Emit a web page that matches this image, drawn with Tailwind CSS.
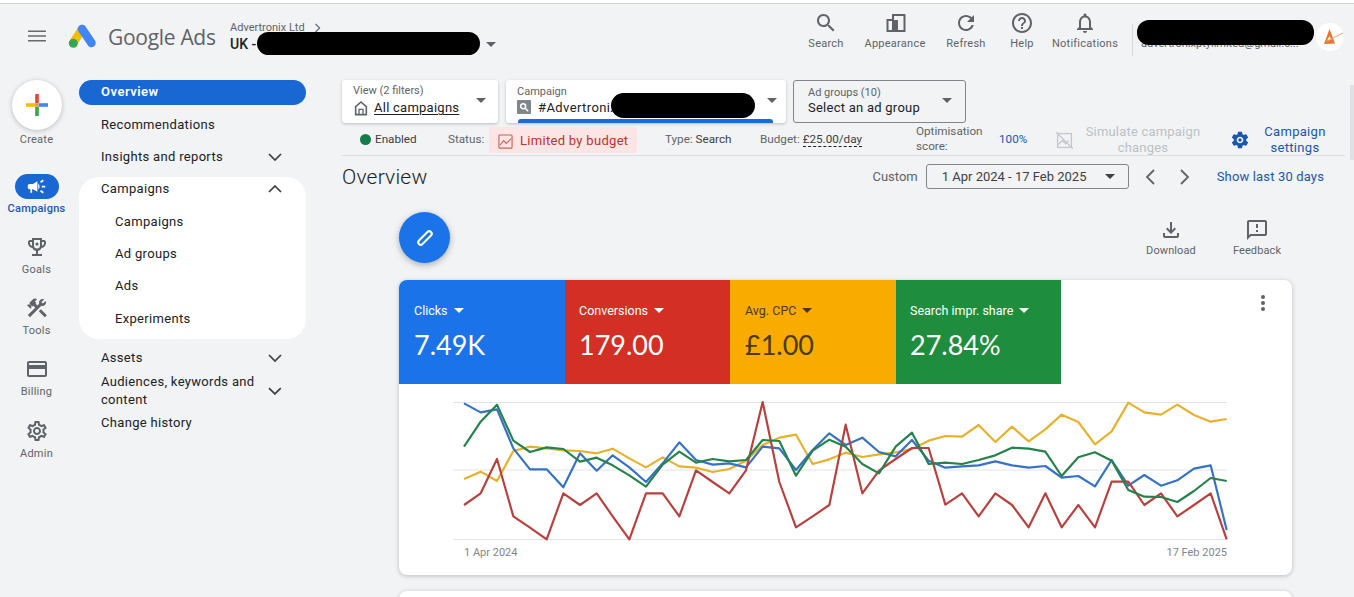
<!DOCTYPE html>
<html lang="en">
<head>
  <meta charset="UTF-8">
  <title>Google Ads</title>
  <script src="https://cdn.jsdelivr.net/npm/@tailwindcss/browser@4"></script>
</head>
<body class="bg-[#f1f3f5] text-[#202124] font-['Roboto',sans-serif]">
<div class="relative w-[1354px] h-[597px] overflow-hidden">
  <!-- Top strip -->
  <div class="h-[4px] bg-white border-b border-[#cfd0d2]"></div>

  <!-- Header -->
  <header class="flex items-start h-[76px]">
    <svg viewBox="0 0 24 24" class="w-[24px] h-[24px] ml-[25px] mt-[20px] text-[#666a6e]" fill="currentColor"><path d="M3 17.5h18v-1.6H3v1.6zm0-4.7h18v-1.6H3v1.6zM3 6.500v1.600h18V6.500H3z"/></svg>
    <!-- Logo -->
    <svg viewBox="0 0 30 28" class="w-[30px] h-[28px] ml-[19px] mt-[19px]">
      <line x1="14" y1="6" x2="5.300" y2="20" stroke="#fbbc04" stroke-width="8.500" stroke-linecap="round"/>
      <line x1="14" y1="6" x2="23.500" y2="20" stroke="#4285f4" stroke-width="8.500" stroke-linecap="round"/>
      <circle cx="5.300" cy="20.300" r="4.500" fill="#34a853"/>
    </svg>
    <div class="ml-[10px] mt-[18px] w-[122px] text-[21px] leading-[30px] text-[#5f6368] font-['Open_Sans',sans-serif] tracking-[-0.3px] whitespace-nowrap">Google Ads</div>
    <div class="w-[270px] mt-[17px]">
      <div class="flex items-center gap-[9px] text-[11px] leading-[13px] text-[#5f6368]">Advertronix Ltd
        <svg viewBox="0 0 8 12" class="w-[7px] h-[10px]" fill="none" stroke="#5f6368" stroke-width="1.400"><path d="M1.500 1l5 5-5 5"/></svg>
      </div>
      <div class="flex items-center text-[14px] leading-[18px] mt-[1px] font-medium">UK -
        <svg viewBox="0 0 10 5" class="w-[10px] h-[5px] ml-[230px] mt-[1px]" fill="#5f6368"><path d="M0 0h10L5 5z"/></svg>
      </div>
    </div>

    <!-- Header tools -->
    <div class="flex ml-[296px] text-[#5f6368] text-[11px] leading-[14px] tracking-[0.25px]">
      <div class="w-[60px] flex flex-col items-center pt-[7px]">
        <svg viewBox="0 0 24 24" class="w-[24px] h-[24px]" fill="currentColor"><path d="M15.500 14h-.79l-.28-.27C15.410 12.590 16 11.110 16 9.500 16 5.910 13.090 3 9.500 3S3 5.910 3 9.500 5.910 16 9.500 16c1.610 0 3.090-.59 4.230-1.570l.27.28v.79l5 4.990L20.490 19l-4.990-5zm-6 0C7.010 14 5 11.990 5 9.500S7.010 5 9.500 5 14 7.010 14 9.500 11.990 14 9.500 14z"/></svg>
        <span class="mt-[2px]">Search</span>
      </div>
      <div class="w-[78px] flex flex-col items-center pt-[7px]">
        <svg viewBox="0 0 24 24" class="w-[24px] h-[24px]" fill="none" stroke="currentColor" stroke-width="2"><path d="M10 9H4.500v11H10zM10 20h11.500V4H10v5"/><rect x="10" y="9" width="5" height="11" fill="currentColor" stroke="none"/></svg>
        <span class="mt-[2px]">Appearance</span>
      </div>
      <div class="w-[64px] flex flex-col items-center pt-[7px]">
        <svg viewBox="0 0 24 24" class="w-[24px] h-[24px]" fill="currentColor"><path d="M17.650 6.350C16.200 4.900 14.210 4 12 4c-4.420 0-7.990 3.580-7.990 8s3.570 8 7.990 8c3.730 0 6.840-2.550 7.730-6h-2.080c-.82 2.330-3.040 4-5.650 4-3.310 0-6-2.690-6-6s2.690-6 6-6c1.660 0 3.140.69 4.220 1.780L13 11h7V4l-2.350 2.350z"/></svg>
        <span class="mt-[2px]">Refresh</span>
      </div>
      <div class="w-[48px] flex flex-col items-center pt-[7px]">
        <svg viewBox="0 0 24 24" class="w-[24px] h-[24px]" fill="currentColor"><path d="M11 18h2v-2h-2v2zm1-16C6.480 2 2 6.480 2 12s4.480 10 10 10 10-4.480 10-10S17.520 2 12 2zm0 18c-4.410 0-8-3.590-8-8s3.590-8 8-8 8 3.590 8 8-3.590 8-8 8zm0-14c-2.210 0-4 1.790-4 4h2c0-1.100.9-2 2-2s2 .9 2 2c0 2-3 1.750-3 5h2c0-2.250 3-2.500 3-5 0-2.210-1.790-4-4-4z"/></svg>
        <span class="mt-[2px]">Help</span>
      </div>
      <div class="w-[78px] flex flex-col items-center pt-[7px]">
        <svg viewBox="0 0 24 24" class="w-[24px] h-[24px]" fill="currentColor"><path d="M12 22c1.100 0 2-.9 2-2h-4c0 1.100.9 2 2 2zm6-6v-5c0-3.070-1.630-5.640-4.500-6.320V4c0-.83-.67-1.500-1.500-1.500s-1.500.67-1.500 1.500v.68C7.640 5.360 6 7.920 6 11v5l-2 2v1h16v-1l-2-2zm-2 1H8v-6c0-2.480 1.510-4.500 4-4.500s4 2.020 4 4.500v6z"/></svg>
        <span class="mt-[2px]">Notifications</span>
      </div>
    </div>
    <div class="w-px h-[32px] bg-[#d5d7da] ml-[8px] mt-[20px]"></div>
    <div class="w-[172px] ml-[8px] mt-[33px] text-[11px] leading-[14px] text-[#5f6368] truncate">advertronixptylimited@gmail.c...</div>
    <!-- Avatar -->
    <div class="w-[28px] h-[28px] ml-[3px] mt-[19px] rounded-full bg-white">
      <svg viewBox="0 0 28 28" class="w-[28px] h-[28px]"><path d="M13.500 6L8 21l11-.5zM13.500 13l2 4-4.300.3z" fill="#e8762c" fill-rule="evenodd"/><path d="M10 18.500L27 10" stroke="#e8a070" stroke-width="1"/></svg>
    </div>
  </header>

  <div class="flex">
    <!-- Icon rail -->
    <aside class="w-[73px] shrink-0 flex flex-col items-center text-[11px] leading-[14px] tracking-[0.25px] text-[#5f6368]">
      <div class="w-[50px] h-[50px] rounded-full bg-white shadow-[0_1px_5px_rgba(60,64,67,0.3)] flex items-center justify-center">
        <svg viewBox="0 0 22 22" class="w-[22px] h-[22px]">
          <rect x="9.200" y="0" width="3.600" height="9.200" fill="#ea4335"/>
          <rect x="12.800" y="9.200" width="9.200" height="3.600" fill="#4285f4"/>
          <rect x="9.200" y="12.800" width="3.600" height="9.200" fill="#34a853"/>
          <rect x="0" y="9.200" width="9.200" height="3.600" fill="#fbbc04"/>
          <rect x="9.200" y="9.200" width="3.600" height="3.600" fill="#c9a35d"/>
        </svg>
      </div>
      <span class="mt-[3px]">Create</span>
      <div class="mt-[27px] w-[44px] h-[25px] rounded-full bg-[#1967d2] flex items-center justify-center">
        <svg viewBox="0 0 24 24" class="w-[21px] h-[21px]" fill="#fff"><path d="M18 11v2h4v-2h-4zm-2 6.610c.96.71 2.210 1.650 3.200 2.390.4-.53.8-1.070 1.200-1.600-.99-.74-2.240-1.680-3.200-2.400-.4.54-.8 1.080-1.200 1.610zM20.400 5.600c-.4-.53-.8-1.070-1.200-1.600-.99.74-2.240 1.680-3.200 2.400.4.53.8 1.070 1.200 1.600.96-.72 2.210-1.650 3.200-2.400zM4 9c-1.100 0-2 .9-2 2v2c0 1.100.9 2 2 2h1v4h2v-4h1l5 3V6L8 9H4zm11.500 3c0-1.330-.58-2.530-1.500-3.350v6.690c.92-.81 1.500-2.010 1.500-3.340z"/></svg>
      </div>
      <span class="mt-[3px] text-[#1a56b0] font-medium">Campaigns</span>
      <svg viewBox="0 0 24 24" class="w-[24px] h-[24px] mt-[19px]" fill="#5f6368"><path d="M19 5h-2V3H7v2H5c-1.100 0-2 .9-2 2v1c0 2.550 1.920 4.630 4.390 4.940.63 1.500 1.980 2.630 3.610 2.960V19H7v2h10v-2h-4v-3.100c1.630-.33 2.980-1.460 3.610-2.960C19.080 12.630 21 10.550 21 8V7c0-1.100-.9-2-2-2zM5 8V7h2v3.820C5.840 10.400 5 9.300 5 8zm14 0c0 1.300-.84 2.400-2 2.820V7h2v1z"/><path d="M9 5h6v5.500a3 3 0 0 1-6 0z" fill="#f1f3f5"/><circle cx="12" cy="9" r="1.600"/></svg>
      <span class="mt-[4px]">Goals</span>
      <svg viewBox="0 0 24 24" class="w-[24px] h-[24px] mt-[19px]" fill="#5f6368"><path d="M13.780 15.300l6 6 2.110-2.160-6-6zM17.500 10c1.930 0 3.500-1.570 3.500-3.500 0-.58-.16-1.120-.41-1.600l-2.700 2.700-1.490-1.490 2.700-2.700c-.48-.25-1.020-.41-1.600-.41C15.570 3 14 4.570 14 6.500c0 .41.08.8.21 1.160l-1.850 1.850-1.780-1.780.71-.71-1.410-1.410L12 3.490c-1.170-1.170-3.070-1.170-4.240 0L4.220 7.030l1.410 1.410H2.810l-.71.71 3.540 3.540.71-.71V9.150l1.410 1.410.71-.71 1.780 1.780-7.410 7.410 2.120 2.120L16.340 9.790c.36.13.75.21 1.160.21z"/></svg>
      <span class="mt-[4px]">Tools</span>
      <svg viewBox="0 0 24 24" class="w-[24px] h-[24px] mt-[19px]" fill="#5f6368"><path d="M20 4H4c-1.110 0-1.990.89-1.990 2L2 18c0 1.110.89 2 2 2h16c1.110 0 2-.89 2-2V6c0-1.110-.89-2-2-2zm0 14H4v-6h16v6zm0-10H4V6h16v2z"/></svg>
      <span class="mt-[4px]">Billing</span>
      <svg viewBox="0 0 24 24" class="w-[24px] h-[24px] mt-[20px]" fill="#5f6368"><path d="M19.430 12.980c.04-.32.07-.64.07-.98 0-.34-.03-.66-.07-.98l2.110-1.650c.19-.15.24-.42.12-.64l-2-3.460c-.09-.16-.26-.25-.44-.25-.06 0-.12.01-.17.03l-2.490 1c-.52-.4-1.080-.73-1.690-.98l-.38-2.650C14.460 2.180 14.250 2 14 2h-4c-.25 0-.46.18-.49.42l-.38 2.650c-.61.25-1.170.59-1.690.98l-2.490-1c-.06-.02-.12-.03-.18-.03-.17 0-.34.09-.43.25l-2 3.460c-.13.22-.07.49.12.64l2.110 1.650c-.04.32-.07.65-.07.98 0 .33.03.66.07.98l-2.110 1.650c-.19.15-.24.42-.12.64l2 3.460c.09.16.26.25.44.25.06 0 .12-.01.17-.03l2.490-1c.52.4 1.080.73 1.690.98l.38 2.650c.03.24.24.42.49.42h4c.25 0 .46-.18.49-.42l.38-2.650c.61-.25 1.170-.59 1.690-.98l2.490 1c.06.02.12.03.18.03.17 0 .34-.09.43-.25l2-3.460c.12-.22.07-.49-.12-.64l-2.110-1.650zm-1.980-1.710c.04.31.05.52.05.73 0 .21-.02.43-.05.73l-.14 1.130.89.7 1.080.84-.7 1.210-1.270-.51-1.040-.42-.9.68c-.43.32-.84.56-1.250.73l-1.060.43-.16 1.130-.2 1.350h-1.400l-.19-1.350-.16-1.130-1.060-.43c-.43-.18-.83-.41-1.230-.71l-.91-.7-1.060.43-1.270.51-.7-1.210 1.080-.84.89-.7-.14-1.130c-.03-.31-.05-.54-.05-.74s.02-.43.05-.73l.14-1.130-.89-.7-1.080-.84.7-1.210 1.270.51 1.040.42.9-.68c.43-.32.84-.56 1.250-.73l1.060-.43.16-1.130.2-1.350h1.390l.19 1.350.16 1.130 1.060.43c.43.18.83.41 1.230.71l.91.7 1.060-.43 1.270-.51.7 1.210-1.070.85-.89.7.14 1.130zM12 8c-2.210 0-4 1.790-4 4s1.790 4 4 4 4-1.790 4-4-1.790-4-4-4zm0 6c-1.100 0-2-.9-2-2s.9-2 2-2 2 .9 2 2-.9 2-2 2z"/></svg>
      <span class="mt-[4px]">Admin</span>
    </aside>

    <!-- Nav -->
    <nav class="w-[227px] ml-[6px] shrink-0 text-[13px] tracking-[0.32px] text-[#202124]">
      <div class="h-[25px] rounded-full bg-[#1967d2] text-white font-semibold tracking-[0.5px] pl-[22px] pb-[2px] flex items-center">Overview</div>
      <div class="h-[32px] mt-[4px] pl-[22px] flex items-center">Recommendations</div>
      <div class="h-[32px] pl-[22px] pr-[24px] flex items-center justify-between">Insights and reports
        <svg viewBox="0 0 14 8" class="w-[14px] h-[8px]" fill="none" stroke="#3c4043" stroke-width="1.700"><path d="M1 1l6 6 6-6"/></svg>
      </div>
      <div class="mt-[4px] h-[162px] rounded-[20px] bg-white pb-[6px]">
        <div class="h-[23px] pl-[22px] pr-[24px] flex items-center justify-between">Campaigns
          <svg viewBox="0 0 14 8" class="w-[14px] h-[8px]" fill="none" stroke="#3c4043" stroke-width="1.700"><path d="M1 7l6-6 6 6"/></svg>
        </div>
        <div class="h-[32px] mt-[6px] pl-[36px] flex items-center">Campaigns</div>
        <div class="h-[32px] pl-[36px] flex items-center">Ad groups</div>
        <div class="h-[32px] pl-[36px] flex items-center">Ads</div>
        <div class="h-[33px] pl-[36px] flex items-center">Experiments</div>
      </div>
      <div class="h-[30px] mt-[4px] pl-[22px] pr-[24px] flex items-center justify-between">Assets
        <svg viewBox="0 0 14 8" class="w-[14px] h-[8px]" fill="none" stroke="#3c4043" stroke-width="1.700"><path d="M1 1l6 6 6-6"/></svg>
      </div>
      <div class="h-[36px] pl-[22px] pr-[24px] flex items-center justify-between leading-[18px]"><span class="w-[170px]">Audiences, keywords and content</span>
        <svg viewBox="0 0 14 8" class="w-[14px] h-[8px]" fill="none" stroke="#3c4043" stroke-width="1.700"><path d="M1 1l6 6 6-6"/></svg>
      </div>
      <div class="h-[28px] pl-[22px] flex items-center">Change history</div>
    </nav>

    <!-- Main -->
    <main class="w-[1003px] ml-[36px] shrink-0">
      <!-- Selectors -->
      <div class="flex h-[43px]">
        <div class="w-[156px] bg-white rounded-[3px] shadow-[0_1px_3px_rgba(60,64,67,0.3)] pl-[11px] pr-[12px] flex items-center justify-between">
          <div class="mb-[3px]">
            <div class="text-[11px] leading-[13px] text-[#5f6368]">View (2 filters)</div>
            <div class="flex items-center gap-[5px] text-[13px] leading-[17px] tracking-[0.25px] mt-[2px]">
              <svg viewBox="0 0 24 24" class="w-[16px] h-[16px]" fill="none" stroke="#5f6368" stroke-width="2.400"><path d="M4 22V10l8-7 8 7v12H4z"/><path d="M9 22v-8h6v8" stroke-width="2"/></svg>
              <span class="underline underline-offset-2">All campaigns</span>
            </div>
          </div>
          <svg viewBox="0 0 10 5" class="w-[10px] h-[5px] mb-[3px]" fill="#5f6368"><path d="M0 0h10L5 5z"/></svg>
        </div>
        <div class="relative w-[280px] ml-[8px] bg-white rounded-[3px] shadow-[0_1px_3px_rgba(60,64,67,0.3)] pl-[11px] pr-[9px] flex items-center justify-between overflow-hidden">
          <div>
            <div class="text-[11px] leading-[13px] mt-[-3px] text-[#5f6368]">Campaign</div>
            <div class="flex items-center gap-[7px] text-[13px] leading-[17px] tracking-[0.4px] mt-[1px]">
              <span class="w-[14px] h-[14px] bg-[#80868b] rounded-[1px] flex items-center justify-center">
                <svg viewBox="0 0 12 12" class="w-[10px] h-[10px]" fill="none" stroke="#fff" stroke-width="1.800"><circle cx="5" cy="5" r="3"/><path d="M7.200 7.200L11 11"/></svg>
              </span>
              <span>#Advertronix</span>
            </div>
          </div>
          <svg viewBox="0 0 10 5" class="w-[10px] h-[5px] mb-[3px]" fill="#5f6368"><path d="M0 0h10L5 5z"/></svg>
          <div class="absolute left-[12px] right-[13px] bottom-0 h-[4px] bg-[#1a6ad8] rounded-t-[3px]"></div>
        </div>
        <div class="w-[173px] ml-[7px] rounded-[3px] border border-[#80868b] pl-[14px] pr-[13px] flex items-center justify-between">
          <div class="mb-[1px]">
            <div class="text-[11px] leading-[13px] text-[#5f6368]">Ad groups (10)</div>
            <div class="text-[13px] leading-[17px] tracking-[0.25px]">Select an ad group</div>
          </div>
          <svg viewBox="0 0 10 5" class="w-[10px] h-[5px] mb-[3px]" fill="#5f6368"><path d="M0 0h10L5 5z"/></svg>
        </div>
      </div>

      <!-- Campaign stats -->
      <div class="flex items-center h-[33px] pt-[2px] border-b border-[#dcdee1] text-[11.7px] text-[#5f6368] pl-[18px]">
        <div class="w-[88px] flex items-center gap-[4px] text-[#3c4043]"><span class="w-[11px] h-[11px] rounded-full bg-[#137c4a]"></span>Enabled</div>
        <div class="w-[41px]">Status:</div>
        <div class="w-[148px] h-[26px] pt-[2px] bg-[#fbe6e5] flex items-center pl-[9px] gap-[7px] text-[13px] tracking-[0.3px] text-[#c5302a]">
          <svg viewBox="0 0 16 16" class="w-[15px] h-[15px]" fill="none" stroke="#d0605c" stroke-width="1.200"><rect x="1" y="1" width="14" height="14" rx="1"/><path d="M2 12l4-5 3 3 5-5"/></svg>
          Limited by budget
        </div>
        <div class="w-[95px] ml-[28px]">Type: <span class="text-[#3c4043]">Search</span></div>
        <div class="w-[156px]">Budget: <span class="text-[#3c4043] border-b border-dashed border-[#202124]">£25.00/day</span></div>
        <div class="w-[83px] mb-[2px] leading-[15px]">Optimisation<br>score:</div>
        <div class="w-[57px] text-[#1a56b0]">100%</div>
        <svg viewBox="0 0 16 16" class="w-[17px] h-[17px]" fill="none" stroke="#c4c7cb" stroke-width="1.200"><rect x="1.500" y="1.500" width="13" height="13"/><path d="M0 0l16 16M2 12l4-4 3 3 3-3"/></svg>
        <div class="w-[130px] ml-[5px] text-center text-[13px] leading-[16px] tracking-[0.2px] text-[#bdc1c6]">Simulate campaign changes</div>
        <svg viewBox="0 0 24 24" class="w-[20px] h-[20px] ml-[22px]" fill="#1a56b0"><path d="M19.430 12.980c.04-.32.07-.64.07-.98 0-.34-.03-.66-.07-.98l2.110-1.650c.19-.15.24-.42.12-.64l-2-3.460c-.12-.22-.39-.3-.61-.22l-2.490 1c-.52-.4-1.080-.73-1.690-.98l-.38-2.650C14.460 2.180 14.250 2 14 2h-4c-.25 0-.46.18-.49.42l-.38 2.650c-.61.25-1.170.59-1.690.98l-2.490-1c-.23-.09-.49 0-.61.22l-2 3.460c-.13.22-.07.49.12.64l2.110 1.650c-.04.32-.07.65-.07.98 0 .33.03.66.07.98l-2.110 1.650c-.19.15-.24.42-.12.64l2 3.460c.12.22.39.3.61.22l2.490-1c.52.4 1.080.73 1.690.98l.38 2.650c.03.24.24.42.49.42h4c.25 0 .46-.18.49-.42l.38-2.650c.61-.25 1.170-.59 1.690-.98l2.490 1c.23.09.49 0 .61-.22l2-3.460c.12-.22.07-.49-.12-.64l-2.110-1.650zM12 16c-2.210 0-4-1.790-4-4s1.790-4 4-4 4 1.790 4 4-1.790 4-4 4zm0-6c-1.100 0-2 .9-2 2s.9 2 2 2 2-.9 2-2-.9-2-2-2z"/></svg>
        <div class="w-[80px] ml-[5px] text-center text-[13px] leading-[16px] tracking-[0.3px] text-[#1a56b0]">Campaign settings</div>
      </div>

      <!-- Overview title + date range -->
      <div class="flex items-center h-[41px] pr-[21px]">
        <h1 class="text-[21px] tracking-[0.2px] pt-[2px] text-[#202124] font-light">Overview</h1>
        <span class="ml-auto text-[13px] text-[#5f6368]">Custom</span>
        <div class="w-[203px] h-[25px] ml-[8px] border border-[#80868b] rounded-[3px] pl-[15px] pr-[13px] flex items-center justify-between text-[13px] text-[#3c4043]">1 Apr 2024 - 17 Feb 2025
          <svg viewBox="0 0 10 5" class="w-[10px] h-[5px]" fill="#3c4043"><path d="M0 0h10L5 5z"/></svg>
        </div>
        <svg viewBox="0 0 10 16" class="w-[10px] h-[16px] ml-[16px]" fill="none" stroke="#5f6368" stroke-width="1.800"><path d="M9 1L2 8l7 7"/></svg>
        <svg viewBox="0 0 10 16" class="w-[10px] h-[16px] ml-[25px]" fill="none" stroke="#5f6368" stroke-width="1.800"><path d="M1 1l7 7-7 7"/></svg>
        <span class="ml-[27px] text-[13px] tracking-[0.15px] text-[#1a56b0]">Show last 30 days</span>
      </div>

      <div class="ml-[57px] w-[893px]">
        <!-- Edit + actions -->
        <div class="flex items-start mt-[15px] h-[51px] text-[11px] leading-[14px] tracking-[0.1px] text-[#5f6368]">
          <div class="w-[51px] h-[51px] rounded-full bg-[#1a73e8] shadow-[0_2px_6px_rgba(60,64,67,0.4)] flex items-center justify-center">
            <svg viewBox="0 0 24 24" class="w-[24px] h-[24px]" fill="none" stroke="#fff" stroke-width="2"><rect x="9.500" y="3.500" width="5" height="17" rx="2.500" transform="rotate(45 12 12)"/></svg>
          </div>
          <div class="ml-auto w-[70px] flex flex-col items-center pt-[6px]">
            <svg viewBox="0 0 24 24" class="w-[24px] h-[24px]" fill="currentColor"><path d="M18 15v3H6v-3H4v3c0 1.100.9 2 2 2h12c1.100 0 2-.9 2-2v-3h-2zm-1-4l-1.410-1.410L13 12.170V4h-2v8.170L8.410 9.590 7 11l5 5 5-5z"/></svg>
            <span class="mt-[2px]">Download</span>
          </div>
          <div class="ml-[16px] w-[70px] flex flex-col items-center pt-[6px]">
            <svg viewBox="0 0 24 24" class="w-[24px] h-[24px]" fill="currentColor"><path d="M20 2H4c-1.100 0-1.990.9-1.990 2L2 22l4-4h14c1.100 0 2-.9 2-2V4c0-1.100-.9-2-2-2zm0 14H5.170L4 17.170V4h16v12zM11 12h2v2h-2zm0-6h2v4h-2z"/></svg>
            <span class="mt-[2px]">Feedback</span>
          </div>
        </div>

        <!-- Chart card -->
        <section class="mt-[17px] h-[295px] bg-white rounded-[8px] shadow-[0_1px_4px_rgba(60,64,67,0.3)] overflow-hidden">
          <div class="flex h-[104px]">
            <div class="w-[166px] bg-[#1a73e8] text-white pl-[15px] pt-[22px]">
              <div class="flex items-center gap-[6px] text-[12.5px] leading-[17px]">Clicks <svg viewBox="0 0 10 5" class="w-[10px] h-[5px]" fill="currentColor"><path d="M0 0h10L5 5z"/></svg></div>
              <div class="text-[27px] leading-[40px] mt-[6px] font-['Lato',sans-serif]">7.49K</div>
            </div>
            <div class="w-[165px] bg-[#d32f25] text-white pl-[14px] pt-[22px]">
              <div class="flex items-center gap-[6px] text-[12.5px] leading-[17px]">Conversions <svg viewBox="0 0 10 5" class="w-[10px] h-[5px]" fill="currentColor"><path d="M0 0h10L5 5z"/></svg></div>
              <div class="text-[27px] leading-[40px] mt-[6px] font-['Lato',sans-serif]">179.00</div>
            </div>
            <div class="w-[166px] bg-[#f9ab00] text-[#4a3a10] pl-[15px] pt-[22px]">
              <div class="flex items-center gap-[6px] text-[12.5px] leading-[17px]">Avg. CPC <svg viewBox="0 0 10 5" class="w-[10px] h-[5px]" fill="currentColor"><path d="M0 0h10L5 5z"/></svg></div>
              <div class="text-[27px] leading-[40px] mt-[6px] font-['Lato',sans-serif]">£1.00</div>
            </div>
            <div class="w-[165px] bg-[#1e8e3e] text-white pl-[14px] pt-[22px]">
              <div class="flex items-center gap-[6px] text-[12.5px] leading-[17px]">Search impr. share <svg viewBox="0 0 10 5" class="w-[10px] h-[5px]" fill="currentColor"><path d="M0 0h10L5 5z"/></svg></div>
              <div class="text-[27px] leading-[40px] mt-[6px] font-['Lato',sans-serif]">27.84%</div>
            </div>
            <svg viewBox="0 0 24 24" class="w-[24px] h-[24px] ml-auto mr-[17px] mt-[11px]" fill="#5f6368"><circle cx="12" cy="6" r="2"/><circle cx="12" cy="12" r="2"/><circle cx="12" cy="18" r="2"/></svg>
          </div>
          <svg viewBox="399 384 893 160" class="block w-[893px] h-[160px]" fill="none">
            <g stroke="#e3e4e6" stroke-width="1.200">
              <path d="M453 402.500H1227M453 470H1227M453 539.500H1227"/>
            </g>
            <g transform="translate(440 390) scale(0.33333)" stroke-width="6.500" stroke-linejoin="round">
              <polyline stroke="#e8b12c" points="72,267 122,245 171,273 220,183 270,170 320,175 370,181 420,183 470,190 518,176 568,205 618,232 668,202 718,229 768,233 818,246 868,237 918,212 968,165 1018,143 1068,134 1118,222 1168,208 1217,188 1267,201 1317,193 1367,187 1416,177 1466,152 1516,138 1566,140 1616,105 1666,156 1716,110 1766,154 1816,118 1865,74 1915,96 1965,163 2015,124 2065,38 2113,67 2163,74 2212,44 2262,75 2312,95 2360,87"/>
              <polyline stroke="#3572c6" points="72,40 122,67 171,58 220,175 270,238 320,238 370,292 420,190 470,242 518,196 568,232 618,276 668,220 718,157 768,210 818,224 868,220 918,232 968,170 1018,175 1068,240 1118,180 1168,130 1217,165 1267,143 1317,186 1367,199 1416,150 1466,212 1516,233 1566,229 1616,226 1666,214 1716,226 1766,233 1816,228 1865,263 1915,258 1965,289 2015,210 2065,287 2113,255 2163,287 2212,271 2262,236 2312,226 2360,420"/>
              <polyline stroke="#b9403d" points="72,345 122,310 171,207 220,379 270,413 320,448 370,310 420,345 470,310 518,379 568,448 618,310 668,310 718,379 768,241 818,276 868,310 918,241 968,36 1018,276 1068,412 1118,379 1168,345 1217,104 1267,310 1317,242 1367,207 1416,174 1466,174 1516,344 1566,310 1616,379 1666,310 1716,345 1766,412 1816,310 1865,412 1915,345 1965,412 2015,275 2065,275 2113,345 2163,310 2212,379 2262,345 2312,310 2360,448"/>
              <polyline stroke="#25824a" points="72,170 122,95 171,44 220,152 270,186 320,172 370,177 420,215 470,203 518,226 568,256 618,290 668,224 718,185 768,218 818,207 868,214 918,210 968,150 1018,153 1068,257 1118,182 1168,149 1217,170 1267,222 1317,250 1367,170 1416,128 1466,222 1516,218 1566,222 1616,210 1666,196 1716,173 1766,176 1816,185 1865,258 1915,202 1965,187 2015,212 2065,300 2113,320 2163,321 2212,336 2262,303 2312,264 2360,273"/>
            </g>
          </svg>
          <div class="flex justify-between mx-[65px] mt-[2px] text-[11px] leading-[14px] text-[#80868b]">
            <span>1 Apr 2024</span><span>17 Feb 2025</span>
          </div>
        </section>

        <!-- Next card, cut off by the window -->
        <div class="mt-[16px] h-[60px] bg-white rounded-[8px] shadow-[0_1px_4px_rgba(60,64,67,0.3)]"></div>
      </div>
    </main>
  </div>

  <!-- Scrollbar thumb -->
  <div class="absolute right-0 top-[85px] w-[4px] h-[75px] bg-[#dfe1e4]"></div>

  <!-- Redaction marks painted over the reference -->
  <div class="absolute left-[257px] top-[32px] w-[223px] h-[23px] rounded-full bg-black"></div>
  <div class="absolute left-[1137px] top-[20px] w-[177px] h-[25px] rounded-[12px] bg-black"></div>
  <div class="absolute left-[611px] top-[93px] w-[144px] h-[25px] rounded-full bg-black"></div>
</div>
</body>
</html>
